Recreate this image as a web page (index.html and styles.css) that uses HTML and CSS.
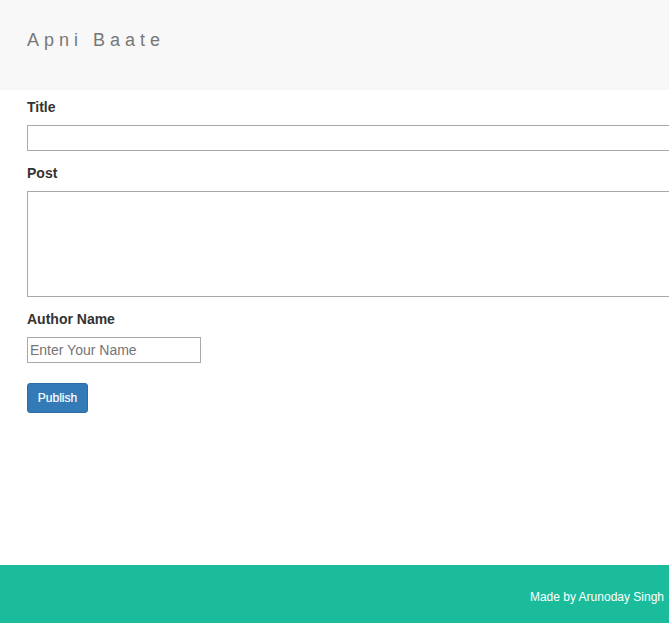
FILE: index.html
```html
<!DOCTYPE html>
<html>
<head>
<meta charset="utf-8">
<link rel="stylesheet" href="styles.css">
</head>
<body>
<div class="page">
  <header class="topbar">
    <div class="brand">Apni Baate</div>
  </header>
  <main class="content">
    <form class="post-form">
      <div class="group">
        <label class="lbl">Title</label>
        <input class="field" type="text">
      </div>
      <div class="group">
        <label class="lbl">Post</label>
        <textarea class="field area"></textarea>
      </div>
      <div class="group">
        <label class="lbl">Author Name</label>
        <input class="field short" type="text" placeholder="Enter Your Name">
      </div>
      <button class="btn" type="button">Publish</button>
    </form>
  </main>
  <footer class="footer">
    <span class="credit">Made by Arunoday Singh</span>
  </footer>
</div>
</body>
</html>
```

FILE: styles.css
```css
html, body {
  margin: 0;
  padding: 0;
  height: 100%;
  overflow: hidden;
}
body {
  font-family: "Liberation Sans", Arial, sans-serif;
  font-size: 14px;
  line-height: 20px;
  color: #333;
  background: #fff;
}
.page {
  display: flex;
  flex-direction: column;
  min-height: 100vh;
  overflow: hidden;
}
.topbar {
  height: 90px;
  box-sizing: border-box;
  background: #f8f8f8;
  padding: 30px 0 0 27px;
}
.brand {
  font-size: 18px;
  line-height: 20px;
  letter-spacing: 5px;
  color: #777;
}
.content {
  flex: 1;
  padding: 7px 0 0 27px;
}
.post-form {
  width: 700px;
}
.group {
  margin-bottom: 12px;
}
.lbl {
  display: block;
  font-weight: bold;
  margin-bottom: 8px;
}
.field {
  display: block;
  box-sizing: border-box;
  width: 700px;
  height: 26px;
  margin: 0;
  padding: 0 2px;
  border: 1px solid #a9a9a9;
  border-radius: 0;
  font-family: "Liberation Sans", Arial, sans-serif;
  font-size: 14px;
  color: #333;
  background: #fff;
}
.area {
  height: 106px;
  resize: none;
}
.short {
  width: 174px;
}
.field::placeholder {
  color: #757575;
}
.btn {
  margin-top: 8px;
  width: 61px;
  height: 30px;
  padding: 0;
  background: #337ab7;
  border: 1px solid #2e6da4;
  border-radius: 3px;
  color: #fff;
  font-family: "Liberation Sans", Arial, sans-serif;
  font-size: 12px;
  font-weight: normal;
  -webkit-text-stroke: 0.2px #fff;
}
.footer {
  height: 58px;
  background: #1abc9c;
  display: flex;
  justify-content: flex-end;
  align-items: center;
  padding: 6px 5px 0 0;
  box-sizing: border-box;
}
.credit {
  color: #fff;
  font-size: 12px;
  line-height: 14px;
}
```
